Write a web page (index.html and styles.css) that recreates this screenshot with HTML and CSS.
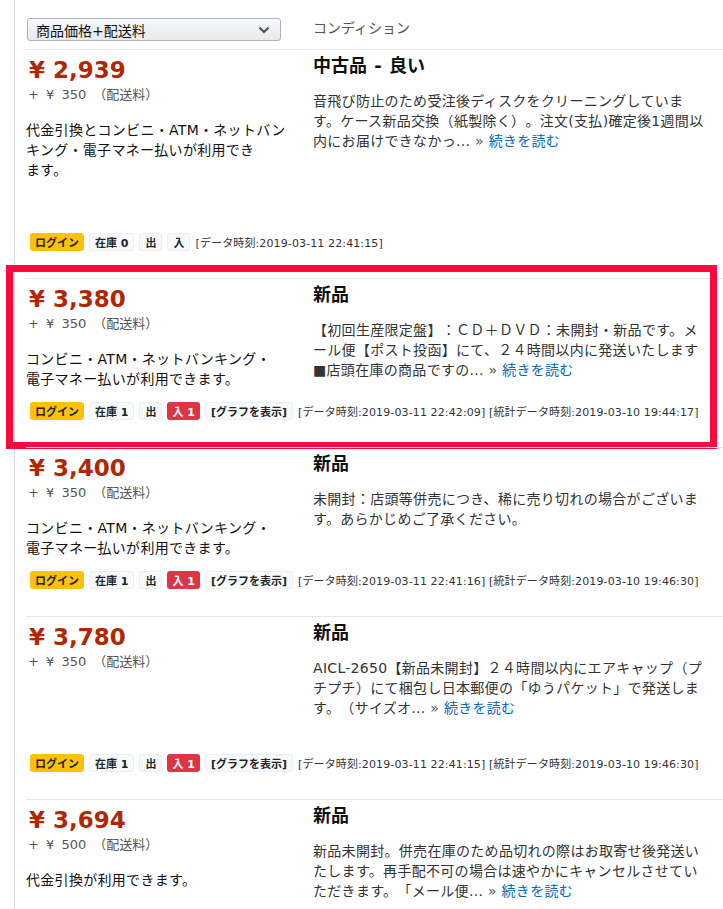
FILE: index.html
```html
<!DOCTYPE html>
<html lang="ja">
<head>
    <meta charset="utf-8">
    <title>出品者一覧</title>
    <link rel="stylesheet" href="styles.css">
</head>
<body>
    <div class="page">
        <div class="list-head">
            <div class="sort-select">
                <span>商品価格+配送料</span>
                <svg class="chevron" width="12" height="8" viewBox="0 0 12 8"><polyline points="1.5,1.5 6,6 10.5,1.5" fill="none" stroke="#555" stroke-width="2.2"/></svg>
            </div>
            <div class="head-label">コンディション</div>
        </div>

        <!-- offer 1 -->
        <div class="offer">
            <div class="offer-main tall">
                <div class="offer-left">
                    <div class="price">¥ 2,939</div>
                    <div class="ship">+ ¥ 350 （配送料）</div>
                    <div class="pay">代金引換とコンビニ・ATM・ネットバンキング・電子マネー払いが利用でき<br>ます。</div>
                </div>
                <div class="offer-right">
                    <div class="cond">中古品 - 良い</div>
                    <div class="desc">音飛び防止のため受注後ディスクをクリーニングしています。ケース新品交換（紙製除く）。注文(支払)確定後1週間以内にお届けできなかっ... <span class="more-mark">»</span> <a href="#">続きを読む</a></div>
                </div>
            </div>
            <div class="offer-foot">
                <span class="badge warn">ログイン</span>
                <span class="badge light">在庫 0</span>
                <span class="badge light">出</span>
                <span class="badge light">入</span>
                <span class="stamp">[データ時刻:2019-03-11 22:41:15]</span>
            </div>
        </div>

        <!-- offer 2 -->
        <div class="offer">
            <div class="highlight"></div>
            <div class="offer-main">
                <div class="offer-left">
                    <div class="price">¥ 3,380</div>
                    <div class="ship">+ ¥ 350 （配送料）</div>
                    <div class="pay">コンビニ・ATM・ネットバンキング・<br>電子マネー払いが利用できます。</div>
                </div>
                <div class="offer-right">
                    <div class="cond">新品</div>
                    <div class="desc">【初回生産限定盤】：ＣＤ＋ＤＶＤ：未開封・新品です。メール便【ポスト投函】にて、２４時間以内に発送いたします■店頭在庫の商品ですの... <span class="more-mark">»</span> <a href="#">続きを読む</a></div>
                </div>
            </div>
            <div class="offer-foot">
                <span class="badge warn">ログイン</span>
                <span class="badge light">在庫 1</span>
                <span class="badge light">出</span>
                <span class="badge danger">入 1</span>
                <span class="badge light">[グラフを表示]</span>
                <span class="stamp">[データ時刻:2019-03-11 22:42:09] [統計データ時刻:2019-03-10 19:44:17]</span>
            </div>
        </div>

        <!-- offer 3 -->
        <div class="offer">
            <div class="offer-main">
                <div class="offer-left">
                    <div class="price">¥ 3,400</div>
                    <div class="ship">+ ¥ 350 （配送料）</div>
                    <div class="pay">コンビニ・ATM・ネットバンキング・<br>電子マネー払いが利用できます。</div>
                </div>
                <div class="offer-right">
                    <div class="cond">新品</div>
                    <div class="desc">未開封：店頭等併売につき、稀に売り切れの場合がございます。あらかじめご了承ください。</div>
                </div>
            </div>
            <div class="offer-foot">
                <span class="badge warn">ログイン</span>
                <span class="badge light">在庫 1</span>
                <span class="badge light">出</span>
                <span class="badge danger">入 1</span>
                <span class="badge light">[グラフを表示]</span>
                <span class="stamp">[データ時刻:2019-03-11 22:41:16] [統計データ時刻:2019-03-10 19:46:30]</span>
            </div>
        </div>

        <!-- offer 4 -->
        <div class="offer">
            <div class="offer-main mid">
                <div class="offer-left">
                    <div class="price">¥ 3,780</div>
                    <div class="ship">+ ¥ 350 （配送料）</div>
                </div>
                <div class="offer-right">
                    <div class="cond">新品</div>
                    <div class="desc">AICL-2650【新品未開封】２４時間以内にエアキャップ（プチプチ）にて梱包し日本郵便の「ゆうパケット」で発送します。（サイズオ... <span class="more-mark">»</span> <a href="#">続きを読む</a></div>
                </div>
            </div>
            <div class="offer-foot">
                <span class="badge warn">ログイン</span>
                <span class="badge light">在庫 1</span>
                <span class="badge light">出</span>
                <span class="badge danger">入 1</span>
                <span class="badge light">[グラフを表示]</span>
                <span class="stamp">[データ時刻:2019-03-11 22:41:15] [統計データ時刻:2019-03-10 19:46:30]</span>
            </div>
        </div>

        <!-- offer 5 -->
        <div class="offer">
            <div class="offer-main">
                <div class="offer-left">
                    <div class="price">¥ 3,694</div>
                    <div class="ship">+ ¥ 500 （配送料）</div>
                    <div class="pay">代金引換が利用できます。</div>
                </div>
                <div class="offer-right">
                    <div class="cond">新品</div>
                    <div class="desc">新品未開封。併売在庫のため品切れの際はお取寄せ後発送いたします。再手配不可の場合は速やかにキャンセルさせていただきます。「メール便... <span class="more-mark">»</span> <a href="#">続きを読む</a></div>
                </div>
            </div>
            <div class="offer-foot">
                <span class="badge warn">ログイン</span>
                <span class="badge light">在庫 1</span>
                <span class="badge light">出</span>
                <span class="badge light">入</span>
                <span class="stamp">[データ時刻:2019-03-11 22:41:15]</span>
            </div>
        </div>
    </div>
</body>
</html>
```

FILE: styles.css
```css
body {
    margin: 0;
    padding: 0;
    background: #fff;
    color: #111;
    font-family: "DejaVu Sans", "Noto Sans CJK JP", sans-serif;
    font-size: 14px;
    text-spacing-trim: space-all;
    overflow-x: hidden;
}
.page {
    margin-left: 14px;
    padding-left: 11px;
    border-left: 1px solid #ddd;
    min-height: 100vh;
}
.list-head {
    display: grid;
    grid-template-columns: 262px 396px;
    column-gap: 25px;
    align-items: center;
    padding: 18px 0 8px 1px;
}
.sort-select {
    width: 234px;
    height: 21px;
    border: 1px solid #adb1b8;
    border-radius: 3px;
    background: linear-gradient(#f7f8fa, #e7e9ec);
    box-shadow: 0 1px 0 rgba(255, 255, 255, 0.6) inset;
    display: flex;
    align-items: center;
    justify-content: space-between;
    padding: 0 10px 0 8px;
    font-size: 14px;
    color: #111;
}
.head-label {
    color: #555;
    font-size: 14px;
    margin-top: -5px;
    margin-left: -1px;
}
.offer {
    position: relative;
    border-top: 1px solid #e7e7e7;
    padding: 5px 0 27px 0;
}
.offer-main {
    display: grid;
    grid-template-columns: 262px 396px;
    column-gap: 25px;
}
.offer-main.tall {
    min-height: 165px;
}
.offer-main.mid {
    min-height: 119px;
}
.price {
    font-weight: bold;
    font-size: 23px;
    line-height: 30px;
    color: #b12704;
    padding-left: 3px;
}
.ship {
    font-size: 13px;
    line-height: 20px;
    color: #555;
    padding-left: 2px;
    word-spacing: 3px;
}
.pay {
    margin-top: 15px;
    line-height: 20px;
    letter-spacing: 0.3px;
    color: #111;
}
.cond {
    font-size: 18px;
    font-weight: bold;
    line-height: 22px;
    word-spacing: 1px;
}
.desc {
    margin-top: 14px;
    line-height: 20px;
    letter-spacing: 0.3px;
    color: #333;
}
.more-mark {
    color: #555;
}
.desc a {
    color: #0066c0;
    text-decoration: none;
}
.offer-foot {
    display: flex;
    align-items: center;
    gap: 5px;
    height: 18px;
    margin-top: 13px;
    padding-left: 4px;
}
.badge {
    display: inline-flex;
    align-items: center;
    height: 18px;
    padding: 0 5px;
    border-radius: 3px;
    font-size: 11px;
    font-weight: bold;
    box-sizing: border-box;
}
.warn {
    background: #ffc107;
    color: #212529;
}
.light {
    background: #f8f9fa;
    color: #212529;
    border: 1px solid #eceef0;
}
.danger {
    background: #dc3545;
    color: #fff;
}
.stamp {
    font-size: 11px;
    letter-spacing: 0.12px;
    color: #333;
    white-space: nowrap;
}
.highlight {
    position: absolute;
    left: -20px;
    top: -14px;
    width: 711px;
    height: 184px;
    border: 7px solid #fb0a3d;
    box-sizing: border-box;
    pointer-events: none;
}
```
